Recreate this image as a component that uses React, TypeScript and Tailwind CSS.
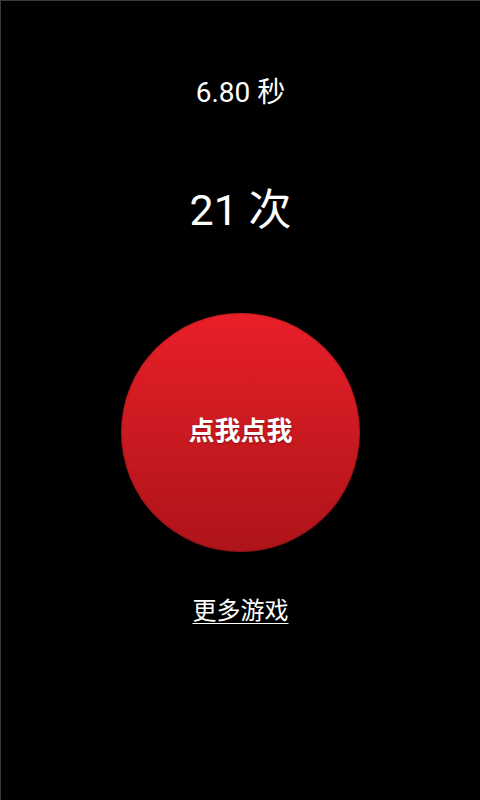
import React from "react";

export default function App() {
  return (
    <div
      className="w-[480px] h-[800px] bg-black flex flex-col items-center border-t border-l border-[#3a3a3a] overflow-hidden"
      style={{ fontFamily: "Roboto, 'Noto Sans CJK SC', sans-serif" }}
    >
      <div className="mt-[76px] text-[28px] leading-[32px] text-white">6.80 秒</div>
      <div className="mt-[77px] text-[43px] leading-[48px] text-white">21 次</div>
      <div className="mt-[79px] w-[239px] h-[239px] rounded-full bg-gradient-to-b from-[#e91f29] to-[#ad1419] shadow-[inset_0_0_2px_rgba(0,0,0,0.5)] flex items-center justify-center">
        <span className="text-[26px] leading-[30px] font-bold text-white [text-shadow:0_1px_2px_rgba(0,0,0,0.35)] translate-y-[-2px]">
          点我点我
        </span>
      </div>
      <div className="mt-[45px] text-[24px] leading-[28px] text-white underline underline-offset-[4px] decoration-1">
        更多游戏
      </div>
    </div>
  );
}
